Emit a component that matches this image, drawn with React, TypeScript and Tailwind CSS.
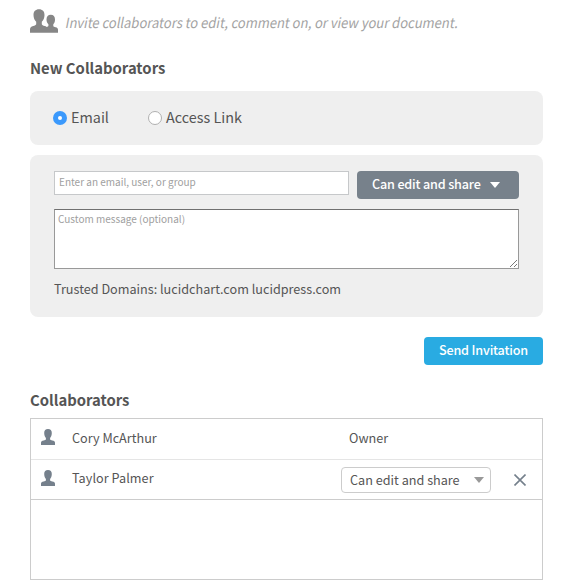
import React from "react";

function PersonIcon() {
  return (
    <svg className="relative -top-0.5 h-4 w-3.5 shrink-0" viewBox="0 0 14 16" fill="#75808c">
      <path d="M7 0C4.500 0 3.200 1.600 3.200 4c0 2.200.8 4 1.700 5v1.600c-.3.500-1 .7-2.200.9C.8 11.900 0 12.500 0 13.800V16h14v-2.200c0-1.300-.8-1.900-2.700-2.300-1.200-.2-1.900-.4-2.200-.9V9c.9-1 1.700-2.800 1.700-5C10.800 1.600 9.500 0 7 0Z" />
    </svg>
  );
}

function PeopleIcon() {
  return (
    <svg className="mt-[9px] h-6 w-7 shrink-0" viewBox="0 0 28 24" fill="#868686">
      <path d="M9 .3C5.500.3 3.500 2.500 3.500 6c0 2.900 1.100 5.300 2.700 6.800v2.400c-.3.900-1.400 1.300-3 1.700C1 17.500 0 18.500 0 20.400v3.300h28v-2.900c0-1.500-.7-2.200-2.400-2.600-1.200-.3-2.100-.6-2.300-1.200v-1.700c1.200-1.100 1.700-2.800 1.700-4.800 0-2.900-1.500-4.700-4.200-4.700s-4.300 1.800-4.300 4.700c0 2 .7 3.700 1.900 4.800v1.600c-.2.500-.8.800-1.700 1-.6-.4-1.300-.6-2-.8-1.700-.5-2.700-.9-2.900-1.800v-2.500c1.600-1.500 2.700-3.900 2.700-6.800C14.500 2.500 12.500.3 9 .3Z" />
    </svg>
  );
}

export default function App() {
  return (
    <div className="h-[588px] w-[570px] overflow-hidden bg-white pl-[30px] font-['Noto_Sans_CJK_SC','Noto_Sans',sans-serif] text-[#555]">
      <div className="w-[513px]">
        <header className="flex h-[57px] items-start">
          <PeopleIcon />
          <p className="mt-[10px] ml-[8px] origin-left [transform:skewX(-11deg)_scaleX(0.928)] text-[14px] leading-6 whitespace-nowrap text-[#a3a3a3]">
            Invite collaborators to edit, comment on, or view your document.
          </p>
        </header>
        <h2 className="h-[34px] text-[14.85px] leading-[21px] font-bold">New Collaborators</h2>

        <div className="flex h-[54px] items-center rounded-lg bg-[#efefef] pl-[23px] text-[14.4px] leading-6">
          <label className="flex w-[95px] items-center gap-1">
            <span className="flex size-[14px] items-center justify-center rounded-full bg-[#3b99fc]">
              <span className="size-1 rounded-full bg-white" />
            </span>
            <span className="pb-0.5">Email</span>
          </label>
          <label className="flex items-center gap-1">
            <span className="size-[14px] rounded-full border border-[#b0b0b0] bg-white" />
            <span className="pb-0.5">Access Link</span>
          </label>
        </div>

        <div className="mt-[10px] h-[162px] rounded-lg bg-[#efefef] px-6 pt-4">
          <div className="flex h-[38px] items-start gap-2">
            <div className="h-6 w-[295px] border border-[#c6c8ca] bg-white pl-1 text-[10px] leading-5 text-[#a0a0a0]">
              Enter an email, user, or group
            </div>
            <button className="flex h-7 w-[162px] items-center rounded bg-[#77818b] pl-[15px] text-[12.6px] leading-[22px] font-medium tracking-[-0.17px] text-white">
              <span className="pb-0.5">Can edit and share</span>
              <svg className="ml-[9px] h-1.5 w-2.5" viewBox="0 0 10 6" fill="white">
                <path d="M0 0h10L5 6Z" />
              </svg>
            </button>
          </div>
          <div className="flex h-[60px] items-end justify-between border border-[#999] border-t-[#707070] bg-white pl-[3px] text-[10px] text-[#a0a0a0]">
            <span className="self-start leading-[18px]">Custom message (optional)</span>
            <svg className="mr-px mb-px h-[7px] w-[7px]" viewBox="0 0 7 7" stroke="#555" strokeWidth="0.8">
              <path d="M0 7 7 0M4 7l3-3" />
            </svg>
          </div>
          <p className="mt-[9px] text-[12.65px] leading-[22px]">Trusted Domains: lucidchart.com lucidpress.com</p>
        </div>

        <div className="mt-5 flex justify-end">
          <button className="flex h-7 w-[119px] justify-center rounded bg-[#29abe2] text-[12.6px] leading-[26px] font-medium tracking-[-0.17px] text-white">
            Send Invitation
          </button>
        </div>

        <h2 className="mt-[24px] h-[29px] text-[14.85px] leading-[21px] font-bold">Collaborators</h2>
        <div className="h-[162px] border border-[#ccc] text-[12.65px]">
          <div className="flex h-[41px] items-center border-b border-[#e5e5e5] pl-[10px]">
            <PersonIcon />
            <span className="ml-[17px] w-[277px] pb-1">Cory McArthur</span>
            <span className="pb-1">Owner</span>
          </div>
          <div className="flex h-10 items-center border-b border-[#ccc] pl-[10px]">
            <PersonIcon />
            <span className="ml-[17px] w-[269px] pb-[5px] tracking-[0.05px]">Taylor Palmer</span>
            <div className="flex h-[26px] w-[150px] items-center justify-between rounded border border-[#ccc] pr-[6px] pl-2">
              Can edit and share
              <svg className="h-1.5 w-2.5" viewBox="0 0 10 6" fill="#999">
                <path d="M0 0h10L5 6Z" />
              </svg>
            </div>
            <svg className="ml-[23px] h-3 w-3" viewBox="0 0 12 12" stroke="#75808c" strokeWidth="1.6">
              <path d="m.5.5 11 11m0-11-11 11" />
            </svg>
          </div>
        </div>
      </div>
    </div>
  );
}
